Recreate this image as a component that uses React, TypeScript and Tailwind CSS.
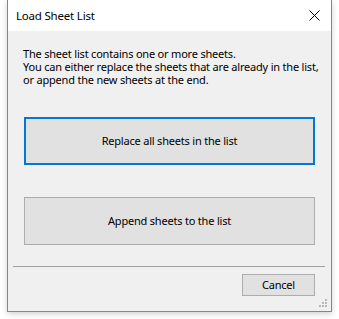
import React from 'react'

// Windows-style "Load Sheet List" dialog
const font = { fontFamily: '"Segoe UI", "Noto Sans", "Liberation Sans", sans-serif' }

const Grip: React.FC = () => (
  <svg width="9" height="9" viewBox="0 0 9 9" className="absolute right-[3px] bottom-[3px]">
    {[
      [6, 0],
      [3, 3],
      [6, 3],
      [0, 6],
      [3, 6],
      [6, 6],
    ].map(([x, y]) => (
      <rect key={`${x}-${y}`} x={x} y={y} width="2" height="2" fill="#b8b8b8" />
    ))}
  </svg>
)

export default function App() {
  return (
    <div className="w-[339px] h-[319px] bg-white" style={font}>
      <div className="ml-[7px] w-[325px] h-[312px] flex flex-col border-x border-b border-[#868686] shadow-[0_2px_6px_rgba(0,0,0,0.18)]">
        <div className="h-[31px] shrink-0 bg-white flex items-center justify-between pl-[8px] pr-[11px]">
          <span className="text-[11.5px] tracking-[-0.2px] text-black">Load Sheet List</span>
          <svg width="11" height="11" viewBox="0 0 11 11">
            <path d="M0.5 0.5 L10.5 10.5 M10.5 0.5 L0.5 10.5" stroke="#000" strokeWidth="1" />
          </svg>
        </div>
        <div className="relative flex-1 bg-[#f0f0f0] flex flex-col pt-[16px]">
          <div className="pl-[15px] text-[11px] leading-[13px] tracking-[-0.2px] text-black whitespace-nowrap">
            <p>The sheet list contains one or more sheets.</p>
            <p>You can either replace the sheets that are already in the list,</p>
            <p>or append the new sheets at the end.</p>
          </div>
          <button
            type="button"
            className="ml-[16px] mt-[31px] w-[291px] h-[48px] bg-[#e1e1e1] border-2 border-[#0078d7] text-[11px] tracking-[-0.2px] text-black"
          >
            Replace all sheets in the list
          </button>
          <button
            type="button"
            className="ml-[16px] mt-[32px] w-[291px] h-[48px] bg-[#e1e1e1] border border-[#adadad] text-[11px] tracking-[-0.2px] text-black"
          >
            Append sheets to the list
          </button>
          <div className="ml-[5px] mt-[21px] w-[312px] h-px bg-[#a0a0a0]" />
          <div className="flex justify-end pr-[16px] mt-[7px]">
            <button
              type="button"
              className="w-[73px] h-[22px] bg-[#e1e1e1] border border-[#adadad] text-[11px] tracking-[-0.2px] text-black"
            >
              Cancel
            </button>
          </div>
          <Grip />
        </div>
      </div>
    </div>
  )
}
